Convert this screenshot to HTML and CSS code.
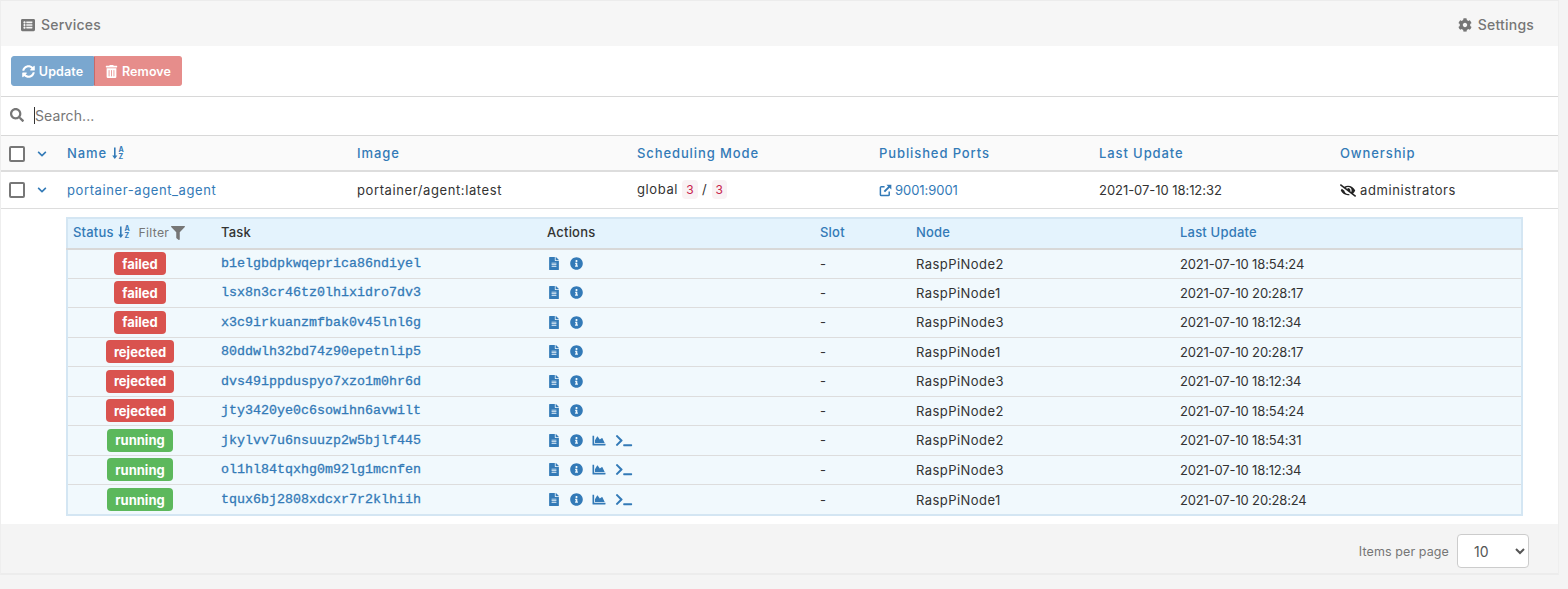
FILE: index.html
```html
<!DOCTYPE html>
<html>
<head>
  <title>Services</title>
  <link rel="stylesheet" href="styles.css">
</head>
<body>

  <!-- Icon set, reused below -->
  <svg class="defs">
    <symbol id="i-list" viewBox="0 0 512 512"><path d="M464 480H48c-26.51 0-48-21.49-48-48V80c0-26.51 21.49-48 48-48h416c26.51 0 48 21.49 48 48v352c0 26.51-21.49 48-48 48zM128 120c-22.091 0-40 17.909-40 40s17.909 40 40 40 40-17.909 40-40-17.909-40-40-40zm0 96c-22.091 0-40 17.909-40 40s17.909 40 40 40 40-17.909 40-40-17.909-40-40-40zm0 96c-22.091 0-40 17.909-40 40s17.909 40 40 40 40-17.909 40-40-17.909-40-40-40zm288-136v-32c0-6.627-5.373-12-12-12H204c-6.627 0-12 5.373-12 12v32c0 6.627 5.373 12 12 12h200c6.627 0 12-5.373 12-12zm0 96v-32c0-6.627-5.373-12-12-12H204c-6.627 0-12 5.373-12 12v32c0 6.627 5.373 12 12 12h200c6.627 0 12-5.373 12-12zm0 96v-32c0-6.627-5.373-12-12-12H204c-6.627 0-12 5.373-12 12v32c0 6.627 5.373 12 12 12h200c6.627 0 12-5.373 12-12z"/></symbol>
    <symbol id="i-cog" viewBox="0 0 512 512"><path d="M487.4 315.7l-42.6-24.6c4.3-23.2 4.3-47 0-70.2l42.6-24.6c4.9-2.8 7.1-8.6 5.5-14-11.1-35.6-30-67.8-54.7-94.6-3.8-4.1-10-5.1-14.8-2.3L380.8 110c-17.9-15.4-38.5-27.3-60.8-35.1V25.8c0-5.6-3.9-10.5-9.4-11.7-36.7-8.2-74.3-7.8-109.2 0-5.5 1.2-9.4 6.1-9.4 11.7V75c-22.2 7.9-42.8 19.8-60.8 35.1L88.7 85.5c-4.9-2.8-11-1.9-14.8 2.3-24.7 26.7-43.6 58.9-54.7 94.6-1.7 5.4.6 11.2 5.5 14L67.3 221c-4.3 23.2-4.3 47 0 70.2l-42.6 24.6c-4.9 2.8-7.1 8.6-5.5 14 11.1 35.6 30 67.8 54.7 94.6 3.8 4.1 10 5.1 14.8 2.3l42.6-24.6c17.9 15.4 38.5 27.3 60.8 35.1v49.2c0 5.6 3.9 10.5 9.4 11.7 36.7 8.2 74.3 7.8 109.2 0 5.5-1.2 9.4-6.1 9.4-11.7v-49.2c22.2-7.9 42.8-19.8 60.8-35.1l42.6 24.6c4.9 2.8 11 1.9 14.8-2.3 24.7-26.7 43.6-58.9 54.7-94.6 1.5-5.5-.7-11.3-5.6-14.1zM256 336c-44.1 0-80-35.9-80-80s35.9-80 80-80 80 35.9 80 80-35.9 80-80 80z"/></symbol>
    <symbol id="i-sync" viewBox="0 0 512 512"><path d="M370.72 133.28C339.458 104.008 298.888 87.962 255.848 88c-77.458.068-144.328 53.178-162.791 126.85-1.344 5.363-6.122 9.15-11.651 9.15H24.103c-7.498 0-13.194-6.807-11.807-14.176C33.933 94.924 134.813 8 256 8c66.448 0 126.791 26.136 171.315 68.685L463.03 40.97C478.149 25.851 504 36.559 504 57.941V192c0 13.255-10.745 24-24 24H345.941c-21.382 0-32.09-25.851-16.971-40.971l41.75-41.749zM32 296h134.059c21.382 0 32.09 25.851 16.971 40.971l-41.75 41.75c31.262 29.273 71.835 45.319 114.876 45.28 77.418-.07 144.315-53.144 162.787-126.849 1.344-5.363 6.122-9.15 11.651-9.15h57.304c7.498 0 13.194 6.807 11.807 14.176C478.067 417.076 377.187 504 256 504c-66.448 0-126.791-26.136-171.315-68.685L48.97 471.03C33.851 486.149 8 475.441 8 454.059V320c0-13.255 10.745-24 24-24z"/></symbol>
    <symbol id="i-trash" viewBox="0 0 448 512"><path d="M32 464a48 48 0 0 0 48 48h288a48 48 0 0 0 48-48V128H32zm272-256a16 16 0 0 1 32 0v224a16 16 0 0 1-32 0zm-96 0a16 16 0 0 1 32 0v224a16 16 0 0 1-32 0zm-96 0a16 16 0 0 1 32 0v224a16 16 0 0 1-32 0zM432 32H312l-9.4-18.7A24 24 0 0 0 281.1 0H166.8a23.72 23.72 0 0 0-21.4 13.3L136 32H16A16 16 0 0 0 0 48v32a16 16 0 0 0 16 16h416a16 16 0 0 0 16-16V48a16 16 0 0 0-16-16z"/></symbol>
    <symbol id="i-search" viewBox="0 0 512 512"><path d="M505 442.7L405.3 343c-4.5-4.5-10.6-7-17-7H372c27.6-35.3 44-79.7 44-128C416 93.1 322.9 0 208 0S0 93.1 0 208s93.1 208 208 208c48.3 0 92.7-16.4 128-44v16.3c0 6.4 2.5 12.5 7 17l99.7 99.7c9.4 9.4 24.6 9.4 33.9 0l28.3-28.3c9.4-9.4 9.4-24.6.1-34zM208 336c-70.7 0-128-57.2-128-128 0-70.7 57.2-128 128-128 70.7 0 128 57.2 128 128 0 70.7-57.2 128-128 128z"/></symbol>
    <symbol id="i-chevron" viewBox="0 0 448 512"><path d="M207.029 381.476L12.686 187.132c-9.373-9.373-9.373-24.569 0-33.941l22.667-22.667c9.357-9.357 24.522-9.375 33.901-.04L224 284.505l154.745-154.021c9.379-9.335 24.544-9.317 33.901.04l22.667 22.667c9.373 9.373 9.373 24.569 0 33.941L240.971 381.476c-9.373 9.372-24.569 9.372-33.942 0z"/></symbol>
    <symbol id="i-sort" viewBox="0 0 14 14"><path d="M3 1.500h1.600v8H6.400L3.800 13 1.200 9.500H3z"/><text x="7.600" y="6" class="sort-letter">A</text><text x="7.600" y="13" class="sort-letter">Z</text></symbol>
    <symbol id="i-link" viewBox="0 0 14 14"><path d="M11 8v3.500a1 1 0 0 1-1 1H2.500a1 1 0 0 1-1-1V4a1 1 0 0 1 1-1H6" fill="none" stroke="currentColor" stroke-width="1.600"/><path d="M8 .7h5.300V6l-1.900-1.900L6.500 9 5 7.500l4.900-4.900z"/></symbol>
    <symbol id="i-eye" viewBox="0 0 640 512"><path d="M320 400c-75.85 0-137.25-58.71-142.9-133.11L72.2 185.82c-13.79 17.3-26.48 35.59-36.72 55.59a32.35 32.35 0 0 0 0 29.19C89.71 376.41 197.07 448 320 448c26.91 0 52.87-4 77.89-10.46L346 397.39a144.13 144.13 0 0 1-26 2.61zm313.82 58.1l-110.55-85.44a331.25 331.25 0 0 0 81.25-102.07 32.35 32.35 0 0 0 0-29.19C550.29 135.59 442.93 64 320 64a308.15 308.15 0 0 0-147.32 37.7L45.46 3.37A16 16 0 0 0 23 6.18L3.37 31.45A16 16 0 0 0 6.18 53.9l588.36 454.73a16 16 0 0 0 22.46-2.81l19.64-25.27a16 16 0 0 0-2.82-22.45zm-183.72-142l-39.3-30.38A94.75 94.75 0 0 0 416 256a94.76 94.76 0 0 0-121.31-92.21A47.65 47.65 0 0 1 304 192a46.64 46.64 0 0 1-1.54 10l-73.61-56.89A142.31 142.31 0 0 1 320 112a143.92 143.92 0 0 1 144 144c0 21.63-5.29 41.79-13.9 60.11z"/></symbol>
    <symbol id="i-filter" viewBox="0 0 512 512"><path d="M487.976 0H24.028C2.71 0-8.047 25.866 7.058 40.971L192 225.941V432c0 7.831 3.821 15.17 10.237 19.662l80 55.98C298.02 518.69 320 507.493 320 487.98V225.941l184.947-184.97C520.021 25.896 509.338 0 487.976 0z"/></symbol>
    <symbol id="i-file" viewBox="0 0 384 512"><path d="M224 136V0H24C10.7 0 0 10.7 0 24v464c0 13.3 10.7 24 24 24h336c13.3 0 24-10.7 24-24V160H248c-13.2 0-24-10.8-24-24zm64 236c0 6.6-5.4 12-12 12H108c-6.6 0-12-5.4-12-12v-8c0-6.6 5.4-12 12-12h168c6.6 0 12 5.4 12 12v8zm0-64c0 6.6-5.4 12-12 12H108c-6.6 0-12-5.4-12-12v-8c0-6.6 5.4-12 12-12h168c6.6 0 12 5.4 12 12v8zm0-72v8c0 6.6-5.4 12-12 12H108c-6.6 0-12-5.4-12-12v-8c0-6.6 5.4-12 12-12h168c6.6 0 12 5.4 12 12zm96-114.100v6.100H256V0h6.100c6.400 0 12.500 2.500 17 7l97.900 98c4.500 4.500 7 10.600 7 16.900z"/></symbol>
    <symbol id="i-info" viewBox="0 0 512 512"><path d="M256 8C119.043 8 8 119.083 8 256c0 136.997 111.043 248 248 248s248-111.003 248-248C504 119.083 392.957 8 256 8zm0 110c23.196 0 42 18.804 42 42s-18.804 42-42 42-42-18.804-42-42 18.804-42 42-42zm56 254c0 6.627-5.373 12-12 12h-88c-6.627 0-12-5.373-12-12v-24c0-6.627 5.373-12 12-12h12v-64h-12c-6.627 0-12-5.373-12-12v-24c0-6.627 5.373-12 12-12h64c6.627 0 12 5.373 12 12v100h12c6.627 0 12 5.373 12 12v24z"/></symbol>
    <symbol id="i-chart" viewBox="0 0 512 512"><path d="M500 384c6.600 0 12 5.400 12 12v40c0 6.600-5.400 12-12 12H12c-6.600 0-12-5.400-12-12V76c0-6.600 5.400-12 12-12h40c6.600 0 12 5.400 12 12v308h436zM372.700 159.500L288 216l-85.300-113.700c-5.100-6.800-15.500-6.300-19.900 1L96 248v104h384l-89.900-187.800c-3.200-6.500-11.400-8.700-17.400-4.700z"/></symbol>
    <symbol id="i-term" viewBox="0 0 640 512"><path d="M257.981 272.971L63.638 467.314c-9.373 9.373-24.569 9.373-33.941 0L7.029 444.647c-9.357-9.357-9.375-24.522-.04-33.901L161.011 256 6.990 101.255c-9.335-9.379-9.317-24.544.04-33.901l22.667-22.667c9.373-9.373 24.569-9.373 33.941 0L257.981 239.030c9.373 9.372 9.373 24.568 0 33.941zM640 456v-32c0-13.255-10.745-24-24-24H312c-13.255 0-24 10.745-24 24v32c0 13.255 10.745 24 24 24h304c13.255 0 24-10.745 24-24z"/></symbol>
  </svg>

  <div class="widget">

    <div class="widget-header">
      <span class="header-title"><svg class="icon icon-title"><use href="#i-list"/></svg>Services</span>
      <span class="header-settings"><svg class="icon icon-title"><use href="#i-cog"/></svg>Settings</span>
    </div>

    <div class="actions">
      <button class="btn btn-update"><svg class="icon icon-btn"><use href="#i-sync"/></svg>Update</button><button class="btn btn-remove"><svg class="icon icon-btn"><use href="#i-trash"/></svg>Remove</button>
    </div>

    <div class="search">
      <svg class="icon icon-search"><use href="#i-search"/></svg>
      <span class="caret"></span>
      <span class="search-text">Search...</span>
    </div>

    <table class="services">
      <colgroup>
        <col class="c-select"><col class="c-name"><col class="c-image"><col class="c-mode"><col class="c-ports"><col class="c-update"><col class="c-owner">
      </colgroup>
      <thead>
        <tr>
          <th class="cell-select"><span class="checkbox"></span><svg class="icon icon-chevron"><use href="#i-chevron"/></svg></th>
          <th>Name <svg class="icon icon-sort"><use href="#i-sort"/></svg></th>
          <th>Image</th>
          <th>Scheduling Mode</th>
          <th>Published Ports</th>
          <th>Last Update</th>
          <th>Ownership</th>
        </tr>
      </thead>
      <tbody>
        <tr>
          <td class="cell-select"><span class="checkbox"></span><svg class="icon icon-chevron"><use href="#i-chevron"/></svg></td>
          <td><a>portainer-agent_agent</a></td>
          <td>portainer/agent:latest</td>
          <td>global <code class="count">3</code> / <code class="count">3</code></td>
          <td class="digits"><a><svg class="icon icon-link"><use href="#i-link"/></svg>9001:9001</a></td>
          <td class="digits">2021-07-10 18:12:32</td>
          <td><svg class="icon icon-eye"><use href="#i-eye"/></svg>administrators</td>
        </tr>
      </tbody>
    </table>

    <div class="tasks-wrap">
      <table class="tasks">
        <colgroup>
          <col class="t-status"><col class="t-task"><col class="t-actions"><col class="t-slot"><col class="t-node"><col class="t-update">
        </colgroup>
        <thead>
          <tr>
            <th><a>Status <svg class="icon icon-sort"><use href="#i-sort"/></svg></a><span class="filter">Filter<svg class="icon icon-filter"><use href="#i-filter"/></svg></span></th>
            <th class="plain">Task</th>
            <th class="plain">Actions</th>
            <th>Slot</th>
            <th>Node</th>
            <th>Last Update</th>
          </tr>
        </thead>
        <tbody id="taskRows">
          <tr><td class="center"><span class="label failed">failed</span></td><td class="task-id">b1elgbdpkwqeprica86ndiyel</td><td class="task-actions"><svg class="icon icon-file"><use href="#i-file"/></svg><svg class="icon icon-info"><use href="#i-info"/></svg></td><td>-</td><td>RaspPiNode2</td><td class="digits">2021-07-10 18:54:24</td></tr>
          <tr><td class="center"><span class="label failed">failed</span></td><td class="task-id">lsx8n3cr46tz0lhixidro7dv3</td><td class="task-actions"><svg class="icon icon-file"><use href="#i-file"/></svg><svg class="icon icon-info"><use href="#i-info"/></svg></td><td>-</td><td>RaspPiNode1</td><td class="digits">2021-07-10 20:28:17</td></tr>
          <tr><td class="center"><span class="label failed">failed</span></td><td class="task-id">x3c9irkuanzmfbak0v45lnl6g</td><td class="task-actions"><svg class="icon icon-file"><use href="#i-file"/></svg><svg class="icon icon-info"><use href="#i-info"/></svg></td><td>-</td><td>RaspPiNode3</td><td class="digits">2021-07-10 18:12:34</td></tr>
          <tr><td class="center"><span class="label failed">rejected</span></td><td class="task-id">80ddwlh32bd74z90epetnlip5</td><td class="task-actions"><svg class="icon icon-file"><use href="#i-file"/></svg><svg class="icon icon-info"><use href="#i-info"/></svg></td><td>-</td><td>RaspPiNode1</td><td class="digits">2021-07-10 20:28:17</td></tr>
          <tr><td class="center"><span class="label failed">rejected</span></td><td class="task-id">dvs49ippduspyo7xzo1m0hr6d</td><td class="task-actions"><svg class="icon icon-file"><use href="#i-file"/></svg><svg class="icon icon-info"><use href="#i-info"/></svg></td><td>-</td><td>RaspPiNode3</td><td class="digits">2021-07-10 18:12:34</td></tr>
          <tr><td class="center"><span class="label failed">rejected</span></td><td class="task-id">jty3420ye0c6sowihn6avwilt</td><td class="task-actions"><svg class="icon icon-file"><use href="#i-file"/></svg><svg class="icon icon-info"><use href="#i-info"/></svg></td><td>-</td><td>RaspPiNode2</td><td class="digits">2021-07-10 18:54:24</td></tr>
          <tr><td class="center"><span class="label running">running</span></td><td class="task-id">jkylvv7u6nsuuzp2w5bjlf445</td><td class="task-actions"><svg class="icon icon-file"><use href="#i-file"/></svg><svg class="icon icon-info"><use href="#i-info"/></svg><svg class="icon icon-chart"><use href="#i-chart"/></svg><svg class="icon icon-term"><use href="#i-term"/></svg></td><td>-</td><td>RaspPiNode2</td><td class="digits">2021-07-10 18:54:31</td></tr>
          <tr><td class="center"><span class="label running">running</span></td><td class="task-id">ol1hl84tqxhg0m92lg1mcnfen</td><td class="task-actions"><svg class="icon icon-file"><use href="#i-file"/></svg><svg class="icon icon-info"><use href="#i-info"/></svg><svg class="icon icon-chart"><use href="#i-chart"/></svg><svg class="icon icon-term"><use href="#i-term"/></svg></td><td>-</td><td>RaspPiNode3</td><td class="digits">2021-07-10 18:12:34</td></tr>
          <tr><td class="center"><span class="label running">running</span></td><td class="task-id">tqux6bj2808xdcxr7r2klhiih</td><td class="task-actions"><svg class="icon icon-file"><use href="#i-file"/></svg><svg class="icon icon-info"><use href="#i-info"/></svg><svg class="icon icon-chart"><use href="#i-chart"/></svg><svg class="icon icon-term"><use href="#i-term"/></svg></td><td>-</td><td>RaspPiNode1</td><td class="digits">2021-07-10 20:28:24</td></tr>
        </tbody>
      </table>
    </div>

    <div class="widget-footer">
      <span class="per-page">Items per page</span>
      <select class="page-size"><option>10</option></select>
    </div>

  </div>

</body>
</html>
```

FILE: styles.css
```css
* {
  box-sizing: border-box;
}

body {
  margin: 0;
  background: #f4f4f4;
  font-family: Inter, "Open Sans", sans-serif;
  font-size: 13px;
  color: #333;
}

a {
  color: #337ab7;
}

.defs {
  display: none;
}

.icon {
  display: inline-block;
  fill: currentColor;
  vertical-align: middle;
}

.widget {
  width: 1559px;
  background: #fff;
  border: 1px solid #eee;
  border-top-color: #ececec;
  border-bottom: 2px solid #ececec;
}

/* Header */

.widget-header {
  height: 45px;
  padding: 2px 24px 0 20px;
  background: #f6f6f6;
  display: flex;
  align-items: center;
  justify-content: space-between;
  color: #767676;
  font-size: 14px;
  font-weight: 500;
  letter-spacing: 0.2px;
}

.icon-title {
  width: 14px;
  height: 14px;
  margin-right: 6px;
  margin-top: -2px;
}

/* Action buttons */

.actions {
  height: 51px;
  padding: 10px 0 0 10px;
  border-bottom: 1px solid #d8d8d8;
}

.btn {
  height: 30px;
  padding: 0 8px;
  border: 1px solid;
  color: #fff;
  font-family: inherit;
  font-size: 12.500px;
  font-weight: 600;
  letter-spacing: 0.1px;
  vertical-align: top;
}

.btn-update {
  width: 83px;
  background: #7aa7cf;
  border-color: #7aa7cf;
  border-radius: 3px 0 0 3px;
}

.btn-remove {
  width: 88px;
  background: #e68d8b;
  border-color: #e68d8b #e68d8b #e68d8b #c76a69;
  border-radius: 0 3px 3px 0;
}

.icon-btn {
  width: 13px;
  height: 13px;
  margin-right: 4px;
  margin-top: -2px;
}

/* Search */

.search {
  height: 39px;
  padding: 0 0 2px 9px;
  border-bottom: 1px solid #d8d8d8;
  display: flex;
  align-items: center;
  color: #767676;
  font-size: 14px;
  letter-spacing: 0.1px;
}

.icon-search {
  width: 14px;
  height: 14px;
}

.caret {
  width: 1px;
  height: 17px;
  margin-left: 10px;
  background: #333;
}

/* Tables */

table {
  width: 100%;
  border-collapse: collapse;
  table-layout: fixed;
}

th {
  text-align: left;
  font-weight: 500;
  color: #337ab7;
}

.services th,
.services td {
  padding: 0 8px;
}

.services thead tr {
  height: 35px;
  background: #fafafa;
  border-bottom: 2px solid #dddddd;
}

.services tbody tr {
  height: 37px;
  border-bottom: 1px solid #ddd;
}

.services th {
  letter-spacing: 0.9px;
}

.services td {
  letter-spacing: 0.6px;
}

.services td.digits {
  letter-spacing: -0.050px;
}

.c-select { width: 58px; }
.c-name   { width: 290px; }
.c-image  { width: 280px; }
.c-mode   { width: 242px; }
.c-ports  { width: 220px; }
.c-update { width: 241px; }

.checkbox {
  display: inline-block;
  width: 16px;
  height: 16px;
  border: 2px solid #777;
  border-radius: 2px;
  background: #fff;
  vertical-align: middle;
}

.icon-chevron {
  width: 10px;
  height: 10px;
  margin-left: 12px;
  color: #337ab7;
}

.icon-sort {
  width: 14px;
  height: 14px;
  margin-top: -2px;
}

.sort-letter {
  font-size: 7px;
  font-weight: 700;
  font-family: Inter, sans-serif;
}

.count {
  display: inline-block;
  min-width: 15px;
  padding: 2px 4px;
  background: #f9f2f4;
  border-radius: 4px;
  color: #c7254e;
  font-family: Inter, sans-serif;
  font-size: 12px;
  letter-spacing: 0;
  text-align: center;
}

.icon-link {
  width: 13px;
  height: 13px;
  margin-right: 3px;
  margin-top: -2px;
}

.icon-eye {
  width: 16px;
  height: 13px;
  margin-right: 4px;
  margin-top: -2px;
  color: #222;
}

/* Nested tasks table */

.tasks-wrap {
  padding: 8px 35px 8px 65px;
}

.tasks {
  border: 2px solid #d4e6f3;
  background: #f1f9fd;
}

.tasks th,
.tasks td {
  padding: 0 6px;
}

.tasks th {
  padding-bottom: 2px;
}

.tasks th:first-child {
  padding-left: 5px;
}

.tasks thead tr {
  height: 31px;
  background: #e4f3fd;
  border-bottom: 2px solid #d8d8d8;
}

.tasks tbody tr {
  height: 29.500px;
  border-bottom: 1px solid #dddddd;
}

.tasks tbody tr:last-child {
  height: 30.500px;
  border-bottom: 0;
}

.tasks th {
  letter-spacing: 0.2px;
}

.tasks td {
  letter-spacing: 0.45px;
}

.tasks td.digits {
  letter-spacing: -0.150px;
}

.tasks th.plain {
  color: #333;
}

.t-status  { width: 148px; }
.t-task    { width: 326px; }
.t-actions { width: 273px; }
.t-slot    { width: 96px; }
.t-node    { width: 264px; }

.filter {
  margin-left: 7px;
  color: #767676;
  font-size: 12.300px;
  font-weight: 400;
  letter-spacing: 0.3px;
}

.icon-filter {
  width: 14px;
  height: 14px;
  margin-left: 2px;
  margin-top: -2px;
}

.tasks td.center {
  padding-right: 9px;
  text-align: center;
}

.label {
  display: inline-block;
  padding: 2.500px 8px;
  border-radius: 4px;
  color: #fff;
  font-size: 13px;
  font-weight: 700;
  letter-spacing: 0;
  line-height: 18px;
  vertical-align: middle;
}

.failed {
  background: #d9534f;
}

.running {
  background: #5cb85c;
}

.tasks .task-id {
  color: #337ab7;
  font-family: "Liberation Mono", monospace;
  font-size: 13.330px;
  letter-spacing: 0;
  -webkit-text-stroke: 0.3px #337ab7;
}

.tasks .task-actions {
  padding-left: 8px;
  color: #337ab7;
}

.task-actions .icon {
  height: 13px;
  margin-top: -3px;
}

.task-actions .icon-file {
  width: 10px;
  margin-right: 11px;
}

.task-actions .icon-info {
  width: 13px;
  margin-right: 9px;
}

.task-actions .icon-chart {
  width: 14px;
  margin-right: 9px;
}

.task-actions .icon-term {
  width: 18px;
}

/* Footer */

.widget-footer {
  height: 49px;
  padding: 5px 29px 0 0;
  background: #f4f4f4;
  display: flex;
  align-items: center;
  justify-content: flex-end;
  gap: 8px;
}

.per-page {
  color: #767676;
  font-size: 12.500px;
  letter-spacing: 0.1px;
}

.page-size {
  width: 72px;
  height: 34px;
  padding-left: 12px;
  background: #fff;
  border: 1px solid #ccc;
  border-radius: 4px;
  color: #555;
  font-family: inherit;
  font-size: 14px;
}
```
